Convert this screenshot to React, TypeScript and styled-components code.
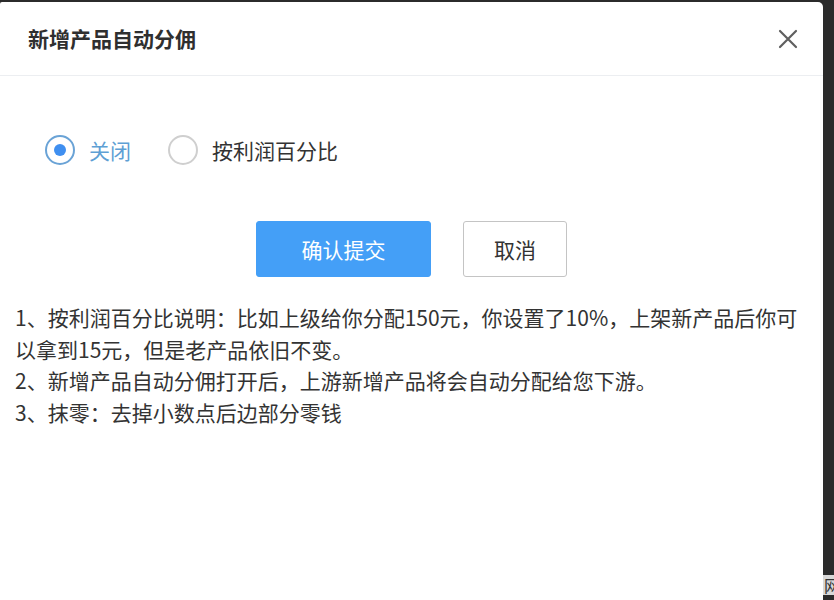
import React, { useState } from "react";
import styled, { createGlobalStyle } from "styled-components";

const Global = createGlobalStyle`
  html, body { margin: 0; padding: 0; background: #2b2b2b; }
  body { font-family: "Noto Sans CJK SC", "Noto Sans", "Liberation Sans", sans-serif; }
`;

const Screen = styled.div`
  display: flex;
  height: 600px;
  width: 834px;
  overflow: hidden;
  background: #2b2b2b;
`;

const Dialog = styled.div`
  width: 823px;
  margin-top: 2px;
  background: #fff;
  border-radius: 2px 5px 0 0;
  display: flex;
  flex-direction: column;
`;

const Header = styled.div`
  height: 74px;
  border-bottom: 1px solid #eceef1;
  display: flex;
  align-items: center;
  justify-content: space-between;
  padding: 0 24px 0 28px;
  box-sizing: border-box;
`;

const Title = styled.div`
  font-size: 21px;
  font-weight: 700;
  color: #2f2f2f;
  margin-top: -2px;
`;

const CloseBtn = styled.button`
  border: 0;
  background: transparent;
  padding: 0;
  width: 22px;
  height: 22px;
  display: flex;
  align-items: center;
  justify-content: center;
  cursor: pointer;
`;

const Body = styled.div`
  padding: 59px 15px 0 15px;
  display: flex;
  flex-direction: column;
`;

const RadioGroup = styled.div`
  display: flex;
  align-items: center;
  padding-left: 30px;
  gap: 37px;
`;

const RadioItem = styled.label`
  display: flex;
  align-items: center;
  gap: 14px;
  cursor: pointer;
`;

const Ring = styled.span<{ $on: boolean }>`
  width: 30px;
  height: 30px;
  box-sizing: border-box;
  border-radius: 50%;
  border: 2px solid ${(p) => (p.$on ? "#6aa3d6" : "#cfcfcf")};
  display: flex;
  align-items: center;
  justify-content: center;
  &::after {
    content: "";
    width: 12px;
    height: 12px;
    border-radius: 50%;
    background: #3f8ff0;
    display: ${(p) => (p.$on ? "block" : "none")};
  }
`;

const RadioText = styled.span<{ $on: boolean }>`
  font-size: 21px;
  color: ${(p) => (p.$on ? "#5e9fd4" : "#333")};
`;

const Actions = styled.div`
  display: flex;
  justify-content: center;
  gap: 32px;
  margin-top: 56px;
`;

const Button = styled.button<{ $primary?: boolean }>`
  height: 56px;
  width: ${(p) => (p.$primary ? "175px" : "104px")};
  border-radius: 3px;
  font-family: inherit;
  font-size: 21px;
  border: 1px solid ${(p) => (p.$primary ? "#449ff7" : "#c4c4c4")};
  background: ${(p) => (p.$primary ? "#449ff7" : "#fff")};
  color: ${(p) => (p.$primary ? "#fff" : "#333")};
  cursor: pointer;
`;

const Notes = styled.div`
  margin-top: 25px;
  font-size: 21px;
  line-height: 31.7px;
  color: #333;
  width: 795px;
`;

const Line = styled.div``;

const Side = styled.div`
  flex: 1;
  display: flex;
  flex-direction: column;
  justify-content: flex-end;
  padding-bottom: 5px;
`;

const Tag = styled.div`
  height: 20px;
  background: #d8d8d8;
  color: #333;
  font-size: 16px;
  line-height: 20px;
  overflow: hidden;
  white-space: nowrap;
  padding-left: 1px;
`;

export default function App() {
  const [mode, setMode] = useState(0);
  const options = ["关闭", "按利润百分比"];
  return (
    <>
      <Global />
      <Screen>
        <Dialog>
          <Header>
            <Title>新增产品自动分佣</Title>
            <CloseBtn aria-label="close">
              <svg width="20" height="20" viewBox="0 0 20 20">
                <path d="M2 2 L18 18 M18 2 L2 18" stroke="#5f5f5f" strokeWidth="2.2" strokeLinecap="round" />
              </svg>
            </CloseBtn>
          </Header>
          <Body>
            <RadioGroup>
              {options.map((o, i) => (
                <RadioItem key={o} onClick={() => setMode(i)}>
                  <Ring $on={mode === i} />
                  <RadioText $on={mode === i}>{o}</RadioText>
                </RadioItem>
              ))}
            </RadioGroup>
            <Actions>
              <Button $primary>确认提交</Button>
              <Button>取消</Button>
            </Actions>
            <Notes>
              <Line>1、按利润百分比说明：比如上级给你分配150元，你设置了10%，上架新产品后你可以拿到15元，但是老产品依旧不变。</Line>
              <Line>2、新增产品自动分佣打开后，上游新增产品将会自动分配给您下游。</Line>
              <Line>3、抹零：去掉小数点后边部分零钱</Line>
            </Notes>
          </Body>
        </Dialog>
        <Side>
          <Tag>网</Tag>
        </Side>
      </Screen>
    </>
  );
}
